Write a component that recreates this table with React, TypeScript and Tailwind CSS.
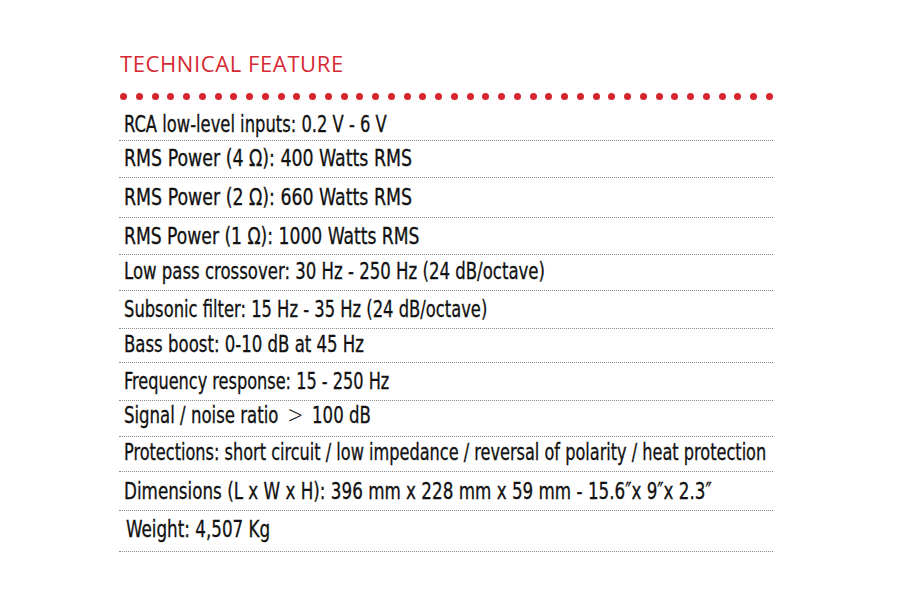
const rows: { text: React.ReactNode; cls: string; sx: string }[] = [
  { text: 'RCA low-level inputs: 0.2 V - 6 V', cls: 'h-[41px] pb-[3px]', sx: 'scale-x-[0.79]' },
  { text: 'RMS Power (4 Ω): 400 Watts RMS', cls: 'h-[37px] pb-[6px]', sx: 'scale-x-[0.84]' },
  { text: 'RMS Power (2 Ω): 660 Watts RMS', cls: 'h-[40px] pb-[7px]', sx: 'scale-x-[0.84]' },
  { text: 'RMS Power (1 Ω): 1000 Watts RMS', cls: 'h-[37px] pb-[5px]', sx: 'scale-x-[0.83]' },
  { text: 'Low pass crossover: 30 Hz - 250 Hz (24 dB/octave)', cls: 'h-[36px] pb-[6px]', sx: 'scale-x-[0.8]' },
  { text: 'Subsonic filter: 15 Hz - 35 Hz (24 dB/octave)', cls: 'h-[38px] pb-[6px]', sx: 'scale-x-[0.79]' },
  { text: 'Bass boost: 0-10 dB at 45 Hz', cls: 'h-[34px] pb-[5px]', sx: 'scale-x-[0.8]' },
  { text: 'Frequency response: 15 - 250 Hz', cls: 'h-[38px] pb-[6px]', sx: 'scale-x-[0.78]' },
  {
    text: (
      <>
        Signal / noise ratio
        <span className="font-['DejaVu_Sans',sans-serif] font-extralight text-[24px] px-[11px] [-webkit-text-stroke:0px]">&gt;</span>
        100 dB
      </>
    ),
    cls: 'h-[36px] pb-[8px]',
    sx: 'scale-x-[0.8]',
  },
  {
    text: 'Protections: short circuit / low impedance / reversal of polarity / heat protection',
    cls: 'h-[35px] pb-[6px]',
    sx: 'scale-x-[0.78]',
  },
  {
    text: 'Dimensions (L x W x H): 396 mm x 228 mm x 59 mm - 15.6″x 9″x 2.3″',
    cls: 'h-[39px] pb-[6px]',
    sx: 'scale-x-[0.81]',
  },
  { text: 'Weight: 4,507 Kg', cls: 'h-[41px] pb-[9px] pl-[7px]', sx: 'scale-x-[0.81]' },
]

export default function App() {
  return (
    <div className="w-[900px] h-[600px] bg-white pl-[119px] pt-[48px]">
      <h1 className="font-['Open_Sans',sans-serif] text-[22px] leading-[30px] text-[#d52a33] pl-[1px] tracking-[0.6px]">
        TECHNICAL FEATURE
      </h1>

      {/* red dotted rule */}
      <div className="w-[654px] flex justify-between mt-[15px] pl-[1px]">
        {Array.from({ length: 42 }).map((_, i) => (
          <span key={i} className="w-[7px] h-[7px] rounded-full bg-[#d7242f]" />
        ))}
      </div>

      <div className="w-[654px] font-['DejaVu_Sans_Condensed','DejaVu_Sans',sans-serif] font-stretch-condensed text-[23px] leading-[26px] text-[#111] [-webkit-text-stroke:0.3px_#111]">
        {rows.map((r, i) => (
          <div
            key={i}
            className={`flex items-end border-b border-dotted border-[#8a8a8a] pl-[5px] whitespace-nowrap ${r.cls}`}
          >
            <span className={`inline-flex items-end origin-left ${r.sx}`}>{r.text}</span>
          </div>
        ))}
      </div>
    </div>
  )
}
